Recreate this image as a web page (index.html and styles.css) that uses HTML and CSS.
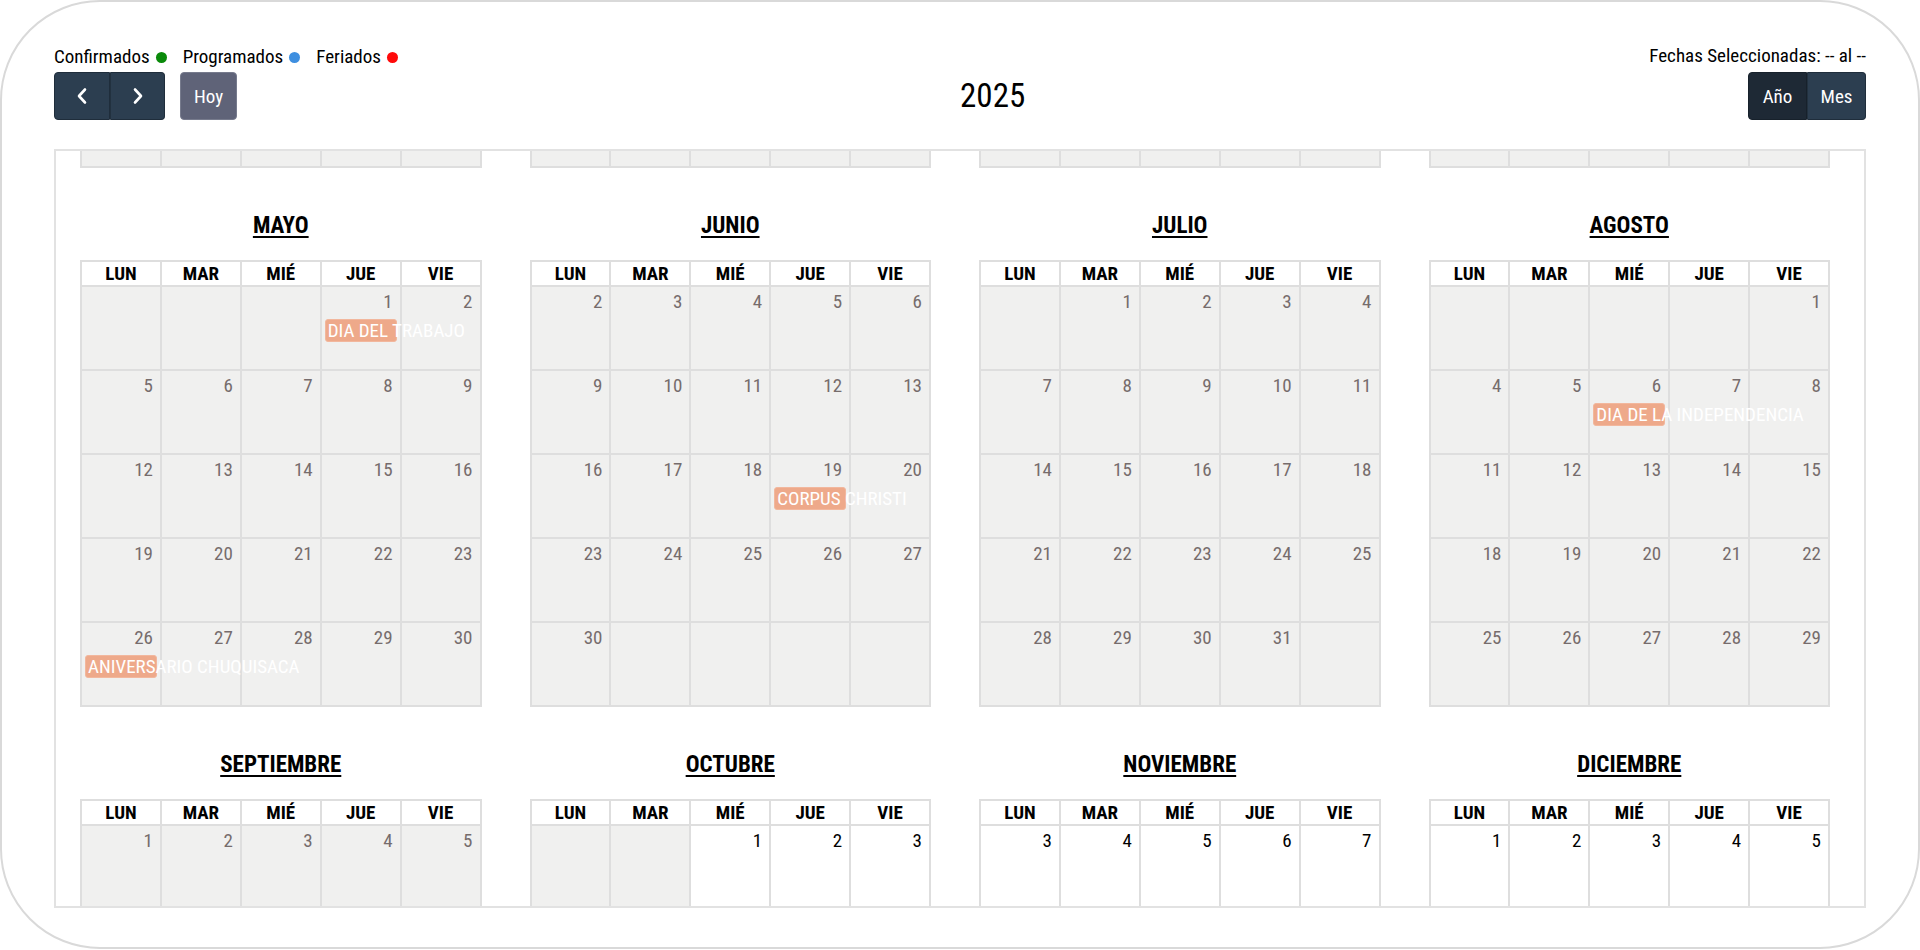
FILE: index.html
```html
<!DOCTYPE html>
<html lang="es">
<head>
<meta charset="utf-8">
<title>Calendario 2025</title>
<link rel="stylesheet" href="styles.css">
</head>
<body>
<div class="card">
  <div class="toolbar">
    <div class="tb-left">
      <div class="legend">
        <span class="legend-item">Confirmados <i class="dot dot-green"></i></span>
        <span class="legend-item">Programados <i class="dot dot-blue"></i></span>
        <span class="legend-item">Feriados <i class="dot dot-red"></i></span>
      </div>
      <div class="btns">
        <div class="btn-group">
          <button class="btn btn-nav btn-first" aria-label="Anterior"><svg width="14" height="18" viewBox="0 0 14 18"><polyline points="10,2.5 4,9 10,15.5" fill="none" stroke="#fff" stroke-width="2.6" stroke-linecap="round" stroke-linejoin="round"/></svg></button>
          <button class="btn btn-nav btn-last" aria-label="Siguiente"><svg width="14" height="18" viewBox="0 0 14 18"><polyline points="4,2.5 10,9 4,15.5" fill="none" stroke="#fff" stroke-width="2.6" stroke-linecap="round" stroke-linejoin="round"/></svg></button>
        </div>
        <button class="btn btn-today">Hoy</button>
      </div>
    </div>
    <div class="year">2025</div>
    <div class="tb-right">
      <div class="range">Fechas Seleccionadas: -- al --</div>
      <div class="btn-group">
        <button class="btn btn-view btn-first active">Año</button>
        <button class="btn btn-view btn-last">Mes</button>
      </div>
    </div>
  </div>

  <div class="scroller">
    <div class="months">

      <section class="month">
        <h2 class="mtitle">ENERO</h2>
        <div class="cal">
          <div class="h">LUN</div><div class="h">MAR</div><div class="h">MIÉ</div><div class="h">JUE</div><div class="h">VIE</div>
          <div class="d"></div><div class="d"></div><div class="d"><div class="n">1</div></div><div class="d"><div class="n">2</div></div><div class="d"><div class="n">3</div></div>
          <div class="d"><div class="n">6</div></div><div class="d"><div class="n">7</div></div><div class="d"><div class="n">8</div></div><div class="d"><div class="n">9</div></div><div class="d"><div class="n">10</div></div>
          <div class="d"><div class="n">13</div></div><div class="d"><div class="n">14</div></div><div class="d"><div class="n">15</div></div><div class="d"><div class="n">16</div></div><div class="d"><div class="n">17</div></div>
          <div class="d"><div class="n">20</div></div><div class="d"><div class="n">21</div></div><div class="d"><div class="n">22</div></div><div class="d"><div class="n">23</div></div><div class="d"><div class="n">24</div></div>
          <div class="d"><div class="n">27</div></div><div class="d"><div class="n">28</div></div><div class="d"><div class="n">29</div></div><div class="d"><div class="n">30</div></div><div class="d"><div class="n">31</div></div>
        </div>
      </section>

      <section class="month">
        <h2 class="mtitle">FEBRERO</h2>
        <div class="cal cal-4">
          <div class="h">LUN</div><div class="h">MAR</div><div class="h">MIÉ</div><div class="h">JUE</div><div class="h">VIE</div>
          <div class="d"><div class="n">3</div></div><div class="d"><div class="n">4</div></div><div class="d"><div class="n">5</div></div><div class="d"><div class="n">6</div></div><div class="d"><div class="n">7</div></div>
          <div class="d"><div class="n">10</div></div><div class="d"><div class="n">11</div></div><div class="d"><div class="n">12</div></div><div class="d"><div class="n">13</div></div><div class="d"><div class="n">14</div></div>
          <div class="d"><div class="n">17</div></div><div class="d"><div class="n">18</div></div><div class="d"><div class="n">19</div></div><div class="d"><div class="n">20</div></div><div class="d"><div class="n">21</div></div>
          <div class="d"><div class="n">24</div></div><div class="d"><div class="n">25</div></div><div class="d"><div class="n">26</div></div><div class="d"><div class="n">27</div></div><div class="d"><div class="n">28</div></div>
        </div>
      </section>

      <section class="month">
        <h2 class="mtitle">MARZO</h2>
        <div class="cal">
          <div class="h">LUN</div><div class="h">MAR</div><div class="h">MIÉ</div><div class="h">JUE</div><div class="h">VIE</div>
          <div class="d"><div class="n">3</div></div><div class="d"><div class="n">4</div></div><div class="d"><div class="n">5</div></div><div class="d"><div class="n">6</div></div><div class="d"><div class="n">7</div></div>
          <div class="d"><div class="n">10</div></div><div class="d"><div class="n">11</div></div><div class="d"><div class="n">12</div></div><div class="d"><div class="n">13</div></div><div class="d"><div class="n">14</div></div>
          <div class="d"><div class="n">17</div></div><div class="d"><div class="n">18</div></div><div class="d"><div class="n">19</div></div><div class="d"><div class="n">20</div></div><div class="d"><div class="n">21</div></div>
          <div class="d"><div class="n">24</div></div><div class="d"><div class="n">25</div></div><div class="d"><div class="n">26</div></div><div class="d"><div class="n">27</div></div><div class="d"><div class="n">28</div></div>
          <div class="d"><div class="n">31</div></div><div class="d"></div><div class="d"></div><div class="d"></div><div class="d"></div>
        </div>
      </section>

      <section class="month">
        <h2 class="mtitle">ABRIL</h2>
        <div class="cal">
          <div class="h">LUN</div><div class="h">MAR</div><div class="h">MIÉ</div><div class="h">JUE</div><div class="h">VIE</div>
          <div class="d"></div><div class="d"><div class="n">1</div></div><div class="d"><div class="n">2</div></div><div class="d"><div class="n">3</div></div><div class="d"><div class="n">4</div></div>
          <div class="d"><div class="n">7</div></div><div class="d"><div class="n">8</div></div><div class="d"><div class="n">9</div></div><div class="d"><div class="n">10</div></div><div class="d"><div class="n">11</div></div>
          <div class="d"><div class="n">14</div></div><div class="d"><div class="n">15</div></div><div class="d"><div class="n">16</div></div><div class="d"><div class="n">17</div></div><div class="d"><div class="n">18</div></div>
          <div class="d"><div class="n">21</div></div><div class="d"><div class="n">22</div></div><div class="d"><div class="n">23</div></div><div class="d"><div class="n">24</div></div><div class="d"><div class="n">25</div></div>
          <div class="d"><div class="n">28</div></div><div class="d"><div class="n">29</div></div><div class="d"><div class="n">30</div></div><div class="d"></div><div class="d"></div>
        </div>
      </section>

      <section class="month">
        <h2 class="mtitle">MAYO</h2>
        <div class="cal">
          <div class="h">LUN</div><div class="h">MAR</div><div class="h">MIÉ</div><div class="h">JUE</div><div class="h">VIE</div>
          <div class="d"></div><div class="d"></div><div class="d"></div><div class="d"><div class="n">1</div><div class="ev">DIA DEL TRABAJO</div></div><div class="d"><div class="n">2</div></div>
          <div class="d"><div class="n">5</div></div><div class="d"><div class="n">6</div></div><div class="d"><div class="n">7</div></div><div class="d"><div class="n">8</div></div><div class="d"><div class="n">9</div></div>
          <div class="d"><div class="n">12</div></div><div class="d"><div class="n">13</div></div><div class="d"><div class="n">14</div></div><div class="d"><div class="n">15</div></div><div class="d"><div class="n">16</div></div>
          <div class="d"><div class="n">19</div></div><div class="d"><div class="n">20</div></div><div class="d"><div class="n">21</div></div><div class="d"><div class="n">22</div></div><div class="d"><div class="n">23</div></div>
          <div class="d"><div class="n">26</div><div class="ev">ANIVERSARIO CHUQUISACA</div></div><div class="d"><div class="n">27</div></div><div class="d"><div class="n">28</div></div><div class="d"><div class="n">29</div></div><div class="d"><div class="n">30</div></div>
        </div>
      </section>

      <section class="month">
        <h2 class="mtitle">JUNIO</h2>
        <div class="cal">
          <div class="h">LUN</div><div class="h">MAR</div><div class="h">MIÉ</div><div class="h">JUE</div><div class="h">VIE</div>
          <div class="d"><div class="n">2</div></div><div class="d"><div class="n">3</div></div><div class="d"><div class="n">4</div></div><div class="d"><div class="n">5</div></div><div class="d"><div class="n">6</div></div>
          <div class="d"><div class="n">9</div></div><div class="d"><div class="n">10</div></div><div class="d"><div class="n">11</div></div><div class="d"><div class="n">12</div></div><div class="d"><div class="n">13</div></div>
          <div class="d"><div class="n">16</div></div><div class="d"><div class="n">17</div></div><div class="d"><div class="n">18</div></div><div class="d"><div class="n">19</div><div class="ev">CORPUS CHRISTI</div></div><div class="d"><div class="n">20</div></div>
          <div class="d"><div class="n">23</div></div><div class="d"><div class="n">24</div></div><div class="d"><div class="n">25</div></div><div class="d"><div class="n">26</div></div><div class="d"><div class="n">27</div></div>
          <div class="d"><div class="n">30</div></div><div class="d"></div><div class="d"></div><div class="d"></div><div class="d"></div>
        </div>
      </section>

      <section class="month">
        <h2 class="mtitle">JULIO</h2>
        <div class="cal">
          <div class="h">LUN</div><div class="h">MAR</div><div class="h">MIÉ</div><div class="h">JUE</div><div class="h">VIE</div>
          <div class="d"></div><div class="d"><div class="n">1</div></div><div class="d"><div class="n">2</div></div><div class="d"><div class="n">3</div></div><div class="d"><div class="n">4</div></div>
          <div class="d"><div class="n">7</div></div><div class="d"><div class="n">8</div></div><div class="d"><div class="n">9</div></div><div class="d"><div class="n">10</div></div><div class="d"><div class="n">11</div></div>
          <div class="d"><div class="n">14</div></div><div class="d"><div class="n">15</div></div><div class="d"><div class="n">16</div></div><div class="d"><div class="n">17</div></div><div class="d"><div class="n">18</div></div>
          <div class="d"><div class="n">21</div></div><div class="d"><div class="n">22</div></div><div class="d"><div class="n">23</div></div><div class="d"><div class="n">24</div></div><div class="d"><div class="n">25</div></div>
          <div class="d"><div class="n">28</div></div><div class="d"><div class="n">29</div></div><div class="d"><div class="n">30</div></div><div class="d"><div class="n">31</div></div><div class="d"></div>
        </div>
      </section>

      <section class="month">
        <h2 class="mtitle">AGOSTO</h2>
        <div class="cal">
          <div class="h">LUN</div><div class="h">MAR</div><div class="h">MIÉ</div><div class="h">JUE</div><div class="h">VIE</div>
          <div class="d"></div><div class="d"></div><div class="d"></div><div class="d"></div><div class="d"><div class="n">1</div></div>
          <div class="d"><div class="n">4</div></div><div class="d"><div class="n">5</div></div><div class="d"><div class="n">6</div><div class="ev">DIA DE LA INDEPENDENCIA</div></div><div class="d"><div class="n">7</div></div><div class="d"><div class="n">8</div></div>
          <div class="d"><div class="n">11</div></div><div class="d"><div class="n">12</div></div><div class="d"><div class="n">13</div></div><div class="d"><div class="n">14</div></div><div class="d"><div class="n">15</div></div>
          <div class="d"><div class="n">18</div></div><div class="d"><div class="n">19</div></div><div class="d"><div class="n">20</div></div><div class="d"><div class="n">21</div></div><div class="d"><div class="n">22</div></div>
          <div class="d"><div class="n">25</div></div><div class="d"><div class="n">26</div></div><div class="d"><div class="n">27</div></div><div class="d"><div class="n">28</div></div><div class="d"><div class="n">29</div></div>
        </div>
      </section>

      <section class="month">
        <h2 class="mtitle">SEPTIEMBRE</h2>
        <div class="cal">
          <div class="h">LUN</div><div class="h">MAR</div><div class="h">MIÉ</div><div class="h">JUE</div><div class="h">VIE</div>
          <div class="d"><div class="n">1</div></div><div class="d"><div class="n">2</div></div><div class="d"><div class="n">3</div></div><div class="d"><div class="n">4</div></div><div class="d"><div class="n">5</div></div>
          <div class="d"><div class="n">8</div></div><div class="d"><div class="n">9</div></div><div class="d"><div class="n">10</div></div><div class="d"><div class="n">11</div></div><div class="d"><div class="n">12</div></div>
          <div class="d"><div class="n">15</div></div><div class="d"><div class="n">16</div></div><div class="d"><div class="n">17</div></div><div class="d"><div class="n">18</div></div><div class="d"><div class="n">19</div></div>
          <div class="d"><div class="n">22</div></div><div class="d"><div class="n">23</div></div><div class="d"><div class="n">24</div></div><div class="d"><div class="n">25</div></div><div class="d"><div class="n">26</div></div>
          <div class="d"><div class="n">29</div></div><div class="d"><div class="n">30</div></div><div class="d"></div><div class="d"></div><div class="d"></div>
        </div>
      </section>

      <section class="month">
        <h2 class="mtitle">OCTUBRE</h2>
        <div class="cal">
          <div class="h">LUN</div><div class="h">MAR</div><div class="h">MIÉ</div><div class="h">JUE</div><div class="h">VIE</div>
          <div class="d"></div><div class="d"></div><div class="d f"><div class="n">1</div></div><div class="d f"><div class="n">2</div></div><div class="d f"><div class="n">3</div></div>
          <div class="d f"><div class="n">6</div></div><div class="d f"><div class="n">7</div></div><div class="d f"><div class="n">8</div></div><div class="d f"><div class="n">9</div></div><div class="d f"><div class="n">10</div></div>
          <div class="d f"><div class="n">13</div></div><div class="d f"><div class="n">14</div></div><div class="d f"><div class="n">15</div></div><div class="d f"><div class="n">16</div></div><div class="d f"><div class="n">17</div></div>
          <div class="d f"><div class="n">20</div></div><div class="d f"><div class="n">21</div></div><div class="d f"><div class="n">22</div></div><div class="d f"><div class="n">23</div></div><div class="d f"><div class="n">24</div></div>
          <div class="d f"><div class="n">27</div></div><div class="d f"><div class="n">28</div></div><div class="d f"><div class="n">29</div></div><div class="d f"><div class="n">30</div></div><div class="d f"><div class="n">31</div></div>
        </div>
      </section>

      <section class="month">
        <h2 class="mtitle">NOVIEMBRE</h2>
        <div class="cal cal-4">
          <div class="h">LUN</div><div class="h">MAR</div><div class="h">MIÉ</div><div class="h">JUE</div><div class="h">VIE</div>
          <div class="d f"><div class="n">3</div></div><div class="d f"><div class="n">4</div></div><div class="d f"><div class="n">5</div></div><div class="d f"><div class="n">6</div></div><div class="d f"><div class="n">7</div></div>
          <div class="d f"><div class="n">10</div></div><div class="d f"><div class="n">11</div></div><div class="d f"><div class="n">12</div></div><div class="d f"><div class="n">13</div></div><div class="d f"><div class="n">14</div></div>
          <div class="d f"><div class="n">17</div></div><div class="d f"><div class="n">18</div></div><div class="d f"><div class="n">19</div></div><div class="d f"><div class="n">20</div></div><div class="d f"><div class="n">21</div></div>
          <div class="d f"><div class="n">24</div></div><div class="d f"><div class="n">25</div></div><div class="d f"><div class="n">26</div></div><div class="d f"><div class="n">27</div></div><div class="d f"><div class="n">28</div></div>
        </div>
      </section>

      <section class="month">
        <h2 class="mtitle">DICIEMBRE</h2>
        <div class="cal">
          <div class="h">LUN</div><div class="h">MAR</div><div class="h">MIÉ</div><div class="h">JUE</div><div class="h">VIE</div>
          <div class="d f"><div class="n">1</div></div><div class="d f"><div class="n">2</div></div><div class="d f"><div class="n">3</div></div><div class="d f"><div class="n">4</div></div><div class="d f"><div class="n">5</div></div>
          <div class="d f"><div class="n">8</div></div><div class="d f"><div class="n">9</div></div><div class="d f"><div class="n">10</div></div><div class="d f"><div class="n">11</div></div><div class="d f"><div class="n">12</div></div>
          <div class="d f"><div class="n">15</div></div><div class="d f"><div class="n">16</div></div><div class="d f"><div class="n">17</div></div><div class="d f"><div class="n">18</div></div><div class="d f"><div class="n">19</div></div>
          <div class="d f"><div class="n">22</div></div><div class="d f"><div class="n">23</div></div><div class="d f"><div class="n">24</div></div><div class="d f"><div class="n">25</div><div class="ev">NAVIDAD</div></div><div class="d f"><div class="n">26</div></div>
          <div class="d f"><div class="n">29</div></div><div class="d f"><div class="n">30</div></div><div class="d f"><div class="n">31</div></div><div class="d"></div><div class="d"></div>
        </div>
      </section>

    </div>
  </div>
</div>
</body>
</html>
```

FILE: styles.css
```css
* { box-sizing: border-box; }

html, body {
  margin: 0;
  padding: 0;
  background: #ffffff;
}

body {
  font-family: "Roboto Condensed", Roboto, "Liberation Sans", sans-serif;
  font-stretch: condensed;
  color: #000000;
  width: 1920px;
  height: 950px;
  overflow: hidden;
}

.card {
  width: 1920px;
  height: 949px;
  border: 2px solid #d9d9d9;
  border-radius: 100px;
  padding: 43px 52px 0 52px;
  overflow: hidden;
  background: #ffffff;
}

/* ---------- toolbar ---------- */
.toolbar {
  display: flex;
  justify-content: space-between;
  align-items: flex-end;
}

.tb-left {
  display: flex;
  flex-direction: column;
  align-items: flex-start;
  gap: 4px;
}

.legend {
  display: flex;
  gap: 16px;
  font-size: 19px;
  line-height: 22px;
  height: 22px;
}

.legend-item {
  display: flex;
  align-items: center;
  gap: 6px;
}

.dot {
  display: inline-block;
  width: 11px;
  height: 11px;
  border-radius: 50%;
}
.dot-green { background: #0a8a0a; }
.dot-blue { background: #3e8fe0; }
.dot-red { background: #ff0a0a; }

.btns {
  display: flex;
  gap: 15px;
}

.btn-group {
  display: flex;
}

.btn {
  height: 48px;
  margin: 0;
  padding: 0;
  font-family: inherit;
  font-stretch: condensed;
  font-size: 19px;
  color: #ffffff;
  border: 1px solid #1f2d3b;
  background: #2c3e50;
  display: flex;
  align-items: center;
  justify-content: center;
  border-radius: 4px;
}

.btn-group .btn-first {
  border-top-right-radius: 0;
  border-bottom-right-radius: 0;
}
.btn-group .btn-last {
  border-top-left-radius: 0;
  border-bottom-left-radius: 0;
  border-left: 1px solid #22313f;
}

.btn-nav { width: 56px; }
.btn-nav.btn-last { width: 55px; }

.btn-today {
  width: 57px;
  background: #5f6378;
  border-color: #777b8d;
}

.btn-view { width: 59px; }
.btn-view.active { background: #1e2935; border-color: #17212b; }

.year {
  font-size: 33px;
  line-height: 48px;
  height: 48px;
  padding-right: 62px;
}

.tb-right {
  display: flex;
  flex-direction: column;
  align-items: flex-end;
  gap: 5px;
}

.range {
  font-size: 19px;
  line-height: 22px;
  height: 22px;
}

/* ---------- scrolling area ---------- */
.scroller {
  margin-top: 29px;
  height: 759px;
  border: 2px solid #e2e2e2;
  overflow: hidden;
}

.months {
  display: grid;
  grid-template-columns: repeat(4, 449.5px);
  margin-top: -522.5px;
}

.month {
  padding: 0 24px;
  min-width: 0;
}

.mtitle {
  margin: 46px 0 22px;
  font-size: 23px;
  line-height: 24px;
  font-weight: 700;
  text-align: center;
  text-decoration: underline;
  text-decoration-thickness: 2px;
  text-underline-offset: 3px;
}

.cal {
  display: grid;
  grid-template-columns: repeat(5, minmax(0, 1fr));
  grid-template-rows: 23px repeat(5, 82.1px);
  gap: 2px;
  padding: 2px;
  background: #dedede;
}

.cal.cal-4 {
  grid-template-rows: 23px repeat(4, 103.1px);
}

.h {
  background: #ffffff;
  text-align: center;
  font-size: 19px;
  line-height: 23px;
  font-weight: 700;
}

.d {
  background: #f0f0ef;
  color: #766c6c;
  padding: 5px 0 0 0;
  min-width: 0;
}

.d.f {
  background: #ffffff;
  color: #000000;
}

.n {
  text-align: right;
  font-size: 19px;
  line-height: 20px;
  padding-right: 7px;
}

.ev {
  position: relative;
  z-index: 1;
  margin: 7px 3px 0 3px;
  height: 23px;
  line-height: 21px;
  padding-left: 2px;
  background: #eea98a;
  border: 1px solid #f2b79d;
  border-radius: 3px;
  color: #ffffff;
  font-size: 19px;
  white-space: nowrap;
  overflow: visible;
}
```
